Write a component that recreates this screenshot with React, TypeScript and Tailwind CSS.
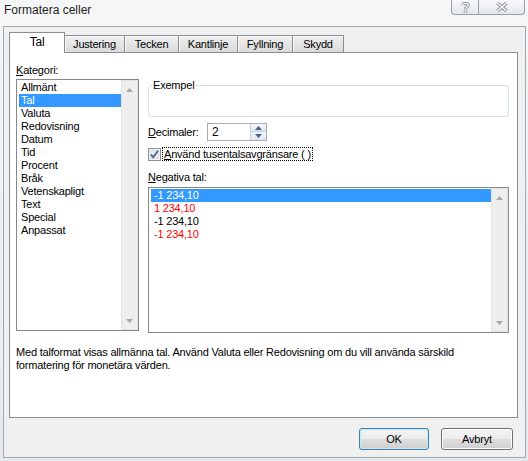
import React from 'react';

const kategorier = [
  'Allmänt',
  'Tal',
  'Valuta',
  'Redovisning',
  'Datum',
  'Tid',
  'Procent',
  'Bråk',
  'Vetenskapligt',
  'Text',
  'Special',
  'Anpassat',
];

const negativa = [
  { text: '-1 234,10', red: false },
  { text: '1 234,10', red: true },
  { text: '-1 234,10', red: false },
  { text: '-1 234,10', red: true },
];

const tabs = [
  { label: 'Justering', w: 'w-[60px]' },
  { label: 'Tecken', w: 'w-[54px]' },
  { label: 'Kantlinje', w: 'w-[59px]' },
  { label: 'Fyllning', w: 'w-[55px]' },
  { label: 'Skydd', w: 'w-[51px]' },
];

function Scrollbar() {
  return (
    <div className="w-[17px] h-full shrink-0 bg-[#eeeeee] border border-[#e4e4e4] flex flex-col justify-between">
      <div className="h-[17px] flex items-center justify-center">
        <svg width="7" height="4" viewBox="0 0 7 4">
          <path d="M0 4 L3.5 0 L7 4 Z" fill="#a6a6a6" />
        </svg>
      </div>
      <div className="h-[17px] flex items-center justify-center">
        <svg width="7" height="4" viewBox="0 0 7 4">
          <path d="M0 0 L3.5 4 L7 0 Z" fill="#a6a6a6" />
        </svg>
      </div>
    </div>
  );
}

function Checkbox() {
  return (
    <svg width="13" height="13" viewBox="0 0 13 13" className="shrink-0">
      <rect x="0.5" y="0.5" width="12" height="12" fill="#f4f4f4" stroke="#8e8f8f" />
      <rect x="2" y="2" width="9" height="9" fill="#dcdcdc" />
      <rect x="3" y="3" width="7" height="7" fill="#ececec" />
      <path d="M3 6.5 L5.2 9.2 L10 2.8" fill="none" stroke="#4a5f97" strokeWidth="1.8" />
    </svg>
  );
}

export default function App() {
  return (
    <div className="w-[528px] h-[461px] overflow-hidden bg-gradient-to-b from-[#f5f6f8] to-[#e6eaee] text-[11px] leading-[13px] tracking-[-0.2px] text-black font-['Liberation_Sans',Arial,sans-serif]">
      {/* titelrad */}
      <div className="h-[26px] flex items-start">
        <div className="pl-[4px] pt-[3px] text-[12px] leading-[15px] tracking-normal text-[#1e1e1e]">Formatera celler</div>
        <div className="ml-auto mr-[3px] w-[74px] h-[15px] flex border border-t-0 border-[#97a0aa] rounded-b-[4px] bg-gradient-to-b from-[#f7f8fa] to-[#e4e8ec]">
          <div className="w-[27px] border-r border-[#97a0aa] flex items-center justify-center">
            <svg width="9" height="11" viewBox="0 0 9 11">
              <path d="M1.8 3.2 C1.8 0.8 7.2 0.8 7.2 3.2 C7.2 5 4.5 5 4.5 7" fill="none" stroke="#8a8f96" strokeWidth="3" />
              <path d="M1.8 3.2 C1.8 0.8 7.2 0.8 7.2 3.2 C7.2 5 4.5 5 4.5 7" fill="none" stroke="#ffffff" strokeWidth="1.2" />
              <circle cx="4.5" cy="9.3" r="1.5" fill="#ffffff" stroke="#8a8f96" strokeWidth="0.9" />
            </svg>
          </div>
          <div className="flex-1 flex items-center justify-center">
            <svg width="12" height="10" viewBox="0 0 12 10">
              <path d="M1.5 1 L10.5 9 M10.5 1 L1.5 9" stroke="#8a8f96" strokeWidth="3.4" />
              <path d="M1.5 1 L10.5 9 M10.5 1 L1.5 9" stroke="#ffffff" strokeWidth="1.4" />
            </svg>
          </div>
        </div>
      </div>

      {/* klientyta */}
      <div className="ml-[3px] w-[523px] h-[432px] border border-[#a3a8ae] bg-[#f0f0f0] flex flex-col">
        {/* flikar */}
        <div className="ml-[5px] mt-[5px] h-[21px] flex items-end -mb-px relative z-10">
          <div className="w-[56px] h-[21px] border border-b-0 border-[#898c95] bg-white flex items-center justify-center pb-[1px] text-[12px]">
            Tal
          </div>
          {tabs.map((t) => (
            <div
              key={t.label}
              className={`${t.w} h-[17px] mb-px border-t border-r border-[#898c95] bg-gradient-to-b from-[#f0f0f0] to-[#dadada] shadow-[inset_1px_1px_0_#fafafa] flex items-center justify-center`}
            >
              {t.label}
            </div>
          ))}
        </div>

        {/* flikpanel */}
        <div className="ml-[5px] w-[509px] h-[366px] border border-[#898c95] bg-white flex flex-col">
          <div className="flex">
            {/* kategori */}
            <div className="pl-[6px] pt-[11px] flex flex-col">
              <div className="h-[13px]">
                <span className="underline">K</span>ategori:
              </div>
              <div className="mt-[2px] w-[123px] h-[252px] border border-[#828790] flex">
                <div className="flex-1 pl-[2px] pt-[1px]">
                  {kategorier.map((k) => (
                    <div
                      key={k}
                      className={`h-[13px] pl-[2px] ${k === 'Tal' ? 'bg-[#3399ff] text-white' : ''}`}
                    >
                      {k}
                    </div>
                  ))}
                </div>
                <Scrollbar />
              </div>
            </div>

            {/* höger del */}
            <div className="ml-[9px] w-[361px] pt-[32px] flex flex-col">
              <div className="h-[32px] border border-[#d5dfe5] rounded-[3px]">
                <div className="-mt-[7px] ml-[3px] w-fit px-px bg-white">Exempel</div>
              </div>

              <div className="mt-[6px] h-[18px] flex items-center">
                <div className="w-[59px]">
                  <span className="underline">D</span>ecimaler:
                </div>
                <div className="w-[60px] h-[18px] border border-[#abadb3] flex">
                  <div className="flex-1 pl-[4px] flex items-center text-[12px]">2</div>
                  <div className="w-[16px] flex flex-col border-l border-[#c9d1da]">
                    <div className="h-[8px] border-b border-[#c9d1da] bg-gradient-to-b from-[#f2f6fa] to-[#dde7f1] flex items-center justify-center">
                      <svg width="7" height="4" viewBox="0 0 7 4">
                        <path d="M0 4 L3.5 0 L7 4 Z" fill="#4d6185" />
                      </svg>
                    </div>
                    <div className="flex-1 bg-gradient-to-b from-[#f2f6fa] to-[#dde7f1] flex items-center justify-center">
                      <svg width="7" height="4" viewBox="0 0 7 4">
                        <path d="M0 0 L3.5 4 L7 0 Z" fill="#4d6185" />
                      </svg>
                    </div>
                  </div>
                </div>
              </div>

              <div className="mt-[6px] h-[14px] flex items-center">
                <Checkbox />
                <div className="ml-[1px] h-[14px] border border-dotted border-black px-[1px] flex items-center">
                  <span className="underline">A</span>nvänd tusentalsavgränsare ( )
                </div>
              </div>

              <div className="mt-[10px] h-[13px]">
                <span className="underline">N</span>egativa tal:
              </div>
              <div className="mt-[3px] h-[146px] border border-[#828790] flex">
                <div className="flex-1 pl-[2px] pt-px">
                  {negativa.map((n, i) => (
                    <div
                      key={i}
                      className={`h-[13px] pl-[3px] ${
                        i === 0 ? 'bg-[#3399ff] text-white' : n.red ? 'text-[#ff0000]' : ''
                      }`}
                    >
                      {n.text}
                    </div>
                  ))}
                </div>
                <Scrollbar />
              </div>
            </div>
          </div>

          <p className="mt-[13px] pl-[6px] pr-[40px]">
            Med talformat visas allmänna tal. Använd Valuta eller Redovisning om du vill använda särskild
            formatering för monetära värden.
          </p>
        </div>

        {/* knappar */}
        <div className="mt-[10px] mr-[12px] flex justify-end gap-[12px]">
          <button className="w-[70px] h-[22px] rounded-[3px] border border-[#3c7fb1] shadow-[inset_0_0_0_1px_#c4e7f9] bg-[linear-gradient(#f4f4f4_0%,#ececec_50%,#dedede_50%,#d0d0d0_100%)] text-[11px]">
            OK
          </button>
          <button className="w-[72px] h-[22px] rounded-[3px] border border-[#707070] shadow-[inset_0_0_0_1px_#fbfbfb] bg-[linear-gradient(#f4f4f4_0%,#ececec_50%,#dedede_50%,#d0d0d0_100%)] text-[11px]">
            Avbryt
          </button>
        </div>
      </div>
    </div>
  );
}
